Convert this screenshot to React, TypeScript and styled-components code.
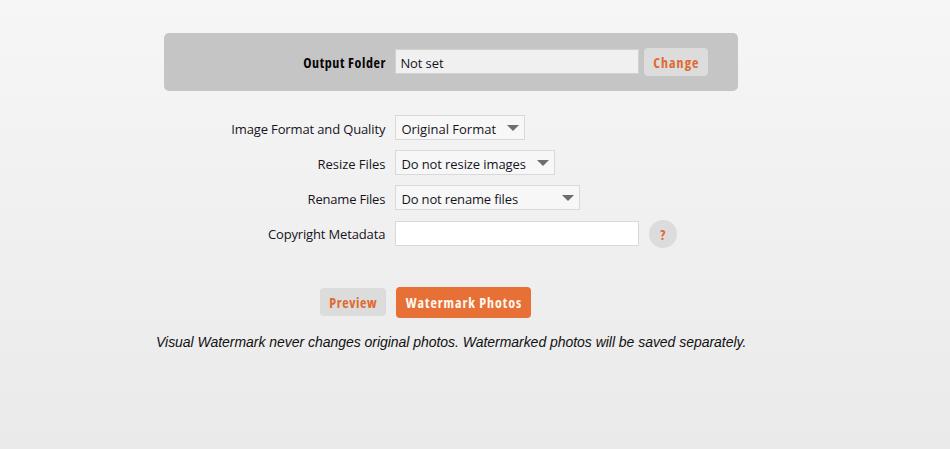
import React from 'react';
import styled, { createGlobalStyle } from 'styled-components';

const GlobalStyle = createGlobalStyle`
  * { box-sizing: border-box; }
  body {
    margin: 0;
    font-family: 'Open Sans', 'Noto Sans', sans-serif;
    font-size: 13px;
    color: #17131c;
  }
`;

const Page = styled.main`
  width: 950px;
  height: 449px;
  overflow: hidden;
  padding-top: 33px;
  background: linear-gradient(#f6f6f6, #eaeaea);
`;

const Row = styled.div<{ $height?: number }>`
  display: grid;
  grid-template-columns: 221.4px 1fr;
  column-gap: 10px;
  align-items: center;
  height: ${p => p.$height ?? 35}px;
`;

const FolderPanel = styled.section`
  width: 574px;
  height: 57.5px;
  margin-left: 164px;
  border-radius: 5px;
  background: #c5c5c5;
`;

const Options = styled.section`
  width: 574px;
  margin: 19.5px 0 0 164px;
`;

const Label = styled.label<{ $spacing?: number; $bold?: boolean }>`
  justify-self: end;
  line-height: 20px;
  padding-top: 2px;
  white-space: nowrap;
  font-size: ${p => (p.$bold ? 14 : 13)}px;
  font-stretch: ${p => (p.$bold ? '75%' : '100%')};
  font-weight: ${p => (p.$bold ? 700 : 400)};
  color: ${p => (p.$bold ? '#050505' : '#17131c')};
  letter-spacing: ${p => p.$spacing ?? 0}px;
  margin-right: ${p => -(p.$spacing ?? 0)}px;
`;

const Controls = styled.div`
  display: flex;
  align-items: center;
`;

const Field = styled.div<{ $filled?: boolean }>`
  width: 243.5px;
  height: 25px;
  margin-right: ${p => (p.$filled ? 5 : 10)}px;
  padding: 2px 0 0 4px;
  line-height: 23px;
  letter-spacing: -0.1px;
  border: 1px solid ${p => (p.$filled ? '#d2d2d2' : '#d9d9d9')};
  background: ${p => (p.$filled ? '#f0f0f0' : '#fff')};
`;

const Select = styled.div<{ $width: number; $spacing: number }>`
  display: flex;
  align-items: center;
  justify-content: space-between;
  width: ${p => p.$width}px;
  height: 25px;
  padding: 0 5px;
  border: 1px solid #d9d9d9;
  background: #f7f7f7;
  white-space: nowrap;
  letter-spacing: ${p => p.$spacing}px;
`;

const SelectText = styled.span`
  line-height: 20px;
  padding-top: 3px;
`;

const Arrow = styled.i`
  margin-top: 1px;
  border: 6px solid transparent;
  border-top-color: #6d6d6d;
  border-bottom: 0;
`;

const Button = styled.button<{ $width: number; $spacing: number; $primary?: boolean }>`
  width: ${p => p.$width}px;
  height: ${p => (p.$primary ? 31 : 28)}px;
  padding: 1px 0 0;
  border: 0;
  border-radius: 4px;
  font: 700 14px 'Open Sans', 'Noto Sans', sans-serif;
  font-stretch: 75%;
  letter-spacing: ${p => p.$spacing}px;
  text-indent: ${p => p.$spacing}px;
  white-space: nowrap;
  color: ${p => (p.$primary ? '#fff8f0' : '#df6930')};
  background: ${p => (p.$primary ? '#e67036' : '#dcdcdc')};
`;

const HelpButton = styled(Button)`
  margin-top: 1px;
  border-radius: 50%;
`;

const Actions = styled.div`
  display: flex;
  align-items: center;
  gap: 10px;
  height: 31px;
  margin: 35.5px 0 0 320px;
`;

const Note = styled.p`
  margin: 15px 0 0 156px;
  font: italic 14px/18px 'Liberation Sans', Arial, sans-serif;
  color: #111;
  white-space: nowrap;
  letter-spacing: -0.035px;
`;

const options = [
  { label: 'Image Format and Quality', labelSpacing: -0.14, value: 'Original Format', width: 129.5, spacing: 0 },
  { label: 'Resize Files', labelSpacing: -0.05, value: 'Do not resize images', width: 159.5, spacing: -0.1 },
  { label: 'Rename Files', labelSpacing: -0.2, value: 'Do not rename files', width: 185, spacing: -0.15 },
];

export default function App() {
  return (
    <>
      <GlobalStyle />
      <Page>
        <FolderPanel>
          <Row $height={57}>
            <Label $bold $spacing={0.6}>Output Folder</Label>
            <Controls>
              <Field $filled>Not set</Field>
              <Button $width={64} $spacing={1}>Change</Button>
            </Controls>
          </Row>
        </FolderPanel>
        <Options>
          {options.map(o => (
            <Row key={o.label}>
              <Label $spacing={o.labelSpacing}>{o.label}</Label>
              <Select $width={o.width} $spacing={o.spacing}>
                <SelectText>{o.value}</SelectText>
                <Arrow />
              </Select>
            </Row>
          ))}
          <Row $height={36}>
            <Label $spacing={-0.15}>Copyright Metadata</Label>
            <Controls>
              <Field />
              <HelpButton $width={28} $spacing={0} aria-label="Help">?</HelpButton>
            </Controls>
          </Row>
        </Options>
        <Actions>
          <Button $width={66} $spacing={0.6}>Preview</Button>
          <Button $width={135} $spacing={0.95} $primary>Watermark Photos</Button>
        </Actions>
        <Note>Visual Watermark never changes original photos. Watermarked photos will be saved separately.</Note>
      </Page>
    </>
  );
}
